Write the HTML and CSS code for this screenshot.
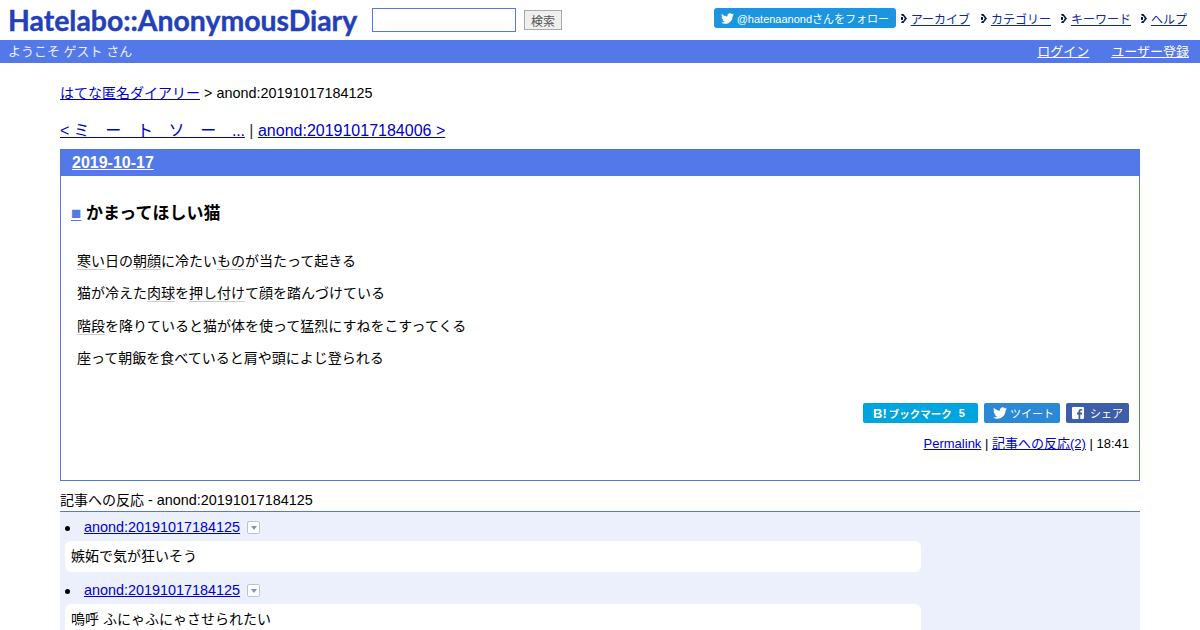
FILE: index.html
```html
<!DOCTYPE html>
<html lang="ja">
<head>
<meta charset="utf-8">
<title>かまってほしい猫</title>
<link rel="stylesheet" href="styles.css">
</head>
<body>
<header class="top">
  <a class="logo" href="#">Hatelabo::AnonymousDiary</a>
  <form class="search">
    <input class="search-input" type="text">
    <button class="search-btn" type="button">検索</button>
  </form>
  <nav class="top-nav">
    <a class="follow" href="#"><svg class="bird" viewBox="0 0 24 24"><path d="M23.953 4.57a10 10 0 01-2.825.775 4.958 4.958 0 002.163-2.723c-.951.555-2.005.959-3.127 1.184a4.92 4.92 0 00-8.384 4.482C7.69 8.095 4.067 6.13 1.64 3.162a4.822 4.822 0 00-.666 2.475c0 1.71.87 3.213 2.188 4.096a4.904 4.904 0 01-2.228-.616v.06a4.923 4.923 0 003.946 4.827 4.996 4.996 0 01-2.212.085 4.936 4.936 0 004.604 3.417 9.867 9.867 0 01-6.102 2.105c-.39 0-.779-.023-1.17-.067a13.995 13.995 0 007.557 2.209c9.053 0 13.998-7.496 13.998-13.985 0-.21 0-.42-.015-.63A9.935 9.935 0 0024 4.59z"/></svg>@hatenaanondさんをフォロー</a>
    <span class="nav-item"><svg class="chev" viewBox="0 0 6 9"><path d="M0 0h2.5L6 4.5 2.5 9H0l1-2h1.2l1.6-2.5L2.200 2H1z"/><path d="M0 3h2v3H0z"/></svg><a href="#">アーカイブ</a></span>
    <span class="nav-item"><svg class="chev" viewBox="0 0 6 9"><path d="M0 0h2.5L6 4.5 2.5 9H0l1-2h1.2l1.6-2.5L2.200 2H1z"/><path d="M0 3h2v3H0z"/></svg><a href="#">カテゴリー</a></span>
    <span class="nav-item"><svg class="chev" viewBox="0 0 6 9"><path d="M0 0h2.5L6 4.5 2.5 9H0l1-2h1.2l1.6-2.5L2.200 2H1z"/><path d="M0 3h2v3H0z"/></svg><a href="#">キーワード</a></span>
    <span class="nav-item"><svg class="chev" viewBox="0 0 6 9"><path d="M0 0h2.5L6 4.5 2.5 9H0l1-2h1.2l1.6-2.5L2.200 2H1z"/><path d="M0 3h2v3H0z"/></svg><a href="#">ヘルプ</a></span>
  </nav>
</header>
<div class="user-bar">
  <span>ようこそ ゲスト さん</span>
  <span class="user-links"><a href="#">ログイン</a><a href="#">ユーザー登録</a></span>
</div>
<main class="main">
  <p class="crumbs"><a class="cjk" href="#">はてな匿名ダイアリー</a> &gt; anond:20191017184125</p>
  <p class="pager"><a class="prev" href="#">&lt; ミ　ー　ト　ソ　ー　...</a> | <a href="#">anond:20191017184006 &gt;</a></p>
  <section class="day">
    <h2 class="day-title"><a href="#">2019-10-17</a></h2>
    <div class="day-body">
      <h3 class="entry-title"><a class="mark" href="#">■</a> かまってほしい猫</h3>
      <div class="entry-text">
        <p><a class="kw" href="#">寒い</a>日の<a class="kw" href="#">朝顔</a>に冷たい<a class="kw" href="#">もの</a>が当たって起きる</p>
        <p>猫が冷えた<a class="kw" href="#">肉球</a>を<a class="kw" href="#">押し付け</a>て顔を踏んづけている</p>
        <p><a class="kw" href="#">階段</a>を降りていると猫が体を使って猛烈にすねをこすってくる</p>
        <p>座って朝飯を食べていると肩や頭によじ登られる</p>
      </div>
      <div class="share">
        <a class="share-btn hatena" href="#"><b class="bang">B!</b><b class="hb-label">ブックマーク</b><b class="count">5</b></a>
        <a class="share-btn tweet" href="#"><svg class="bird big" viewBox="0 0 24 24"><path d="M23.953 4.57a10 10 0 01-2.825.775 4.958 4.958 0 002.163-2.723c-.951.555-2.005.959-3.127 1.184a4.92 4.92 0 00-8.384 4.482C7.69 8.095 4.067 6.13 1.64 3.162a4.822 4.822 0 00-.666 2.475c0 1.71.87 3.213 2.188 4.096a4.904 4.904 0 01-2.228-.616v.06a4.923 4.923 0 003.946 4.827 4.996 4.996 0 01-2.212.085 4.936 4.936 0 004.604 3.417 9.867 9.867 0 01-6.102 2.105c-.39 0-.779-.023-1.17-.067a13.995 13.995 0 007.557 2.209c9.053 0 13.998-7.496 13.998-13.985 0-.21 0-.42-.015-.63A9.935 9.935 0 0024 4.59z"/></svg>ツイート</a>
        <a class="share-btn fb" href="#"><svg class="fb-icon" viewBox="0 0 12 12"><path fill-rule="evenodd" d="M1 0h10a1 1 0 011 1v10a1 1 0 01-1 1H8.3V7.400h1.500l.3-1.800H8.300V4.500c0-.5.2-.9.9-.9h1V2c-.3 0-.8-.1-1.300-.1-1.400 0-2.400.8-2.400 2.400v1.300H5v1.800h1.500V12H1a1 1 0 01-1-1V1a1 1 0 011-1z"/></svg>シェア</a>
      </div>
      <p class="meta"><a href="#">Permalink</a> | <a href="#">記事への反応(2)</a> | 18:41</p>
    </div>
  </section>
  <section class="refs">
    <h4 class="refs-title"><span class="cjk">記事への反応</span> - anond:20191017184125</h4>
    <ul class="ref-list">
      <li class="ref">
        <div class="ref-head"><a href="#">anond:20191017184125</a><button class="toggle" type="button"></button></div>
        <div class="ref-card">嫉妬で気が狂いそう</div>
      </li>
      <li class="ref">
        <div class="ref-head"><a href="#">anond:20191017184125</a><button class="toggle" type="button"></button></div>
        <div class="ref-card">嗚呼 ふにゃふにゃさせられたい</div>
      </li>
    </ul>
  </section>
</main>
</body>
</html>
```
FILE: styles.css
```css
html { overflow: hidden; height: 630px; }
body {
  margin: 0;
  height: 630px;
  overflow: hidden;
  font-family: "Liberation Sans", "Noto Sans CJK JP", sans-serif;
  font-size: 14.4px;
  color: #000;
  background: #fff;
}
a { color: #0000cc; }
.cjk { font-size: 14px; }

.top { display: flex; align-items: flex-start; height: 40px; padding: 0 8px; box-sizing: border-box; }
.logo {
  display: block;
  width: 364px;
  flex: none;
  margin-top: 1px;
  font-family: "Lato", "Liberation Sans", sans-serif;
  font-size: 28.4px;
  line-height: 38px;
  font-weight: 700;
  -webkit-text-stroke: 0.4px #2440b8;
  color: #2440b8;
  text-decoration: none;
  white-space: nowrap;
}
.search { display: flex; align-items: flex-start; gap: 8px; }
.search-input {
  width: 144px; height: 24px; margin: 8px 0 0; padding: 0;
  box-sizing: border-box; border: 1px solid #5279e7; background: #fff;
}
.search-btn {
  width: 38px; height: 20px; margin: 10px 0 0; padding: 0;
  box-sizing: border-box; border: 1px solid #aaa; background: #efefef;
  color: #555; font: 12px "Liberation Sans", "Noto Sans CJK JP", sans-serif;
}
.top-nav { display: flex; align-items: center; margin-left: auto; margin-top: 8px; padding-right: 5px; font-size: 12px; }
.follow {
  display: flex; align-items: center; width: 182px; height: 20px; box-sizing: border-box;
  padding-left: 7px; margin-right: 5px;
  background: #1b95e0; border-radius: 3px; color: #fff; text-decoration: none; font-size: 11px;
  white-space: nowrap;
}
.bird { width: 13px; height: 13px; fill: #fff; margin-right: 3px; flex: none; }
.nav-item { display: flex; align-items: center; margin-right: 10px; }
.nav-item:first-of-type { margin-right: 11px; }
.nav-item:last-child { margin-right: 0; }
.nav-item a { color: #0a2a9c; }
.chev { width: 6px; height: 9px; margin-right: 4px; fill: #0b1a4a; flex: none; }

.user-bar {
  display: flex; justify-content: space-between; align-items: center;
  height: 23px; box-sizing: border-box; padding: 0 11px 2px 8px;
  background: #5279e7; color: #eef; font-size: 13px;
}
.user-links { display: flex; gap: 22px; }
.user-links a { color: #fff; }

.main { margin: 0 60px; }
.crumbs { margin: 21px 0 0; line-height: 18px; }
.pager { margin: 19px 0 0; font-size: 16px; line-height: 19px; color: #333; }
.prev { letter-spacing: -0.15px; }

.day { margin-top: 9px; border: 1px solid #5577d8; height: 332px; box-sizing: border-box; }
.day-title {
  margin: 0; padding: 0 11px; height: 26px; line-height: 26px;
  background: #5279e7; font-size: 16px;
}
.day-title a { color: #fff; }
.day-body { padding: 0 10px 0 11px; }
.entry-title { margin: 28px 0 0; font-size: 17px; line-height: 20px; font-weight: 700; }
.mark { color: #5279e7; font-size: 17px; margin-left: -1px; }
.entry-text { margin: 27px 0 0; padding-left: 5px; font-size: 14px; }
.entry-text p { margin: 0 0 12.4px; line-height: 20px; }
.kw { color: inherit; text-decoration: none; border-bottom: 1px solid #ccc; }
.share { display: flex; justify-content: flex-end; gap: 6px; margin-top: 35px; }
.share-btn {
  display: flex; align-items: center; height: 20px; box-sizing: border-box;
  border-radius: 2px; color: #fff; text-decoration: none; font-size: 11px; white-space: nowrap;
}
.hatena { width: 115px; padding-left: 10px; background: #00a4de; }
.bang { font-size: 13px; margin-right: 2px; }
.hb-label { font-size: 10.5px; }
.count { margin-left: 7px; font-size: 11px; }
.tweet { width: 76px; padding-left: 9px; background: #2a88d4; }
.big { width: 14px; height: 14px; margin-right: 3px; }
.fb { width: 63px; padding-left: 6px; background: #3d5ea8; }
.fb-icon { width: 12px; height: 12px; fill: #fff; margin-right: 6px; }
.meta { margin: 12px 0 0; font-size: 13px; text-align: right; line-height: 18px; }

.refs { margin-top: 10px; }
.refs-title { margin: 0; padding-bottom: 2px; font-size: 14.4px; font-weight: 400; line-height: 18px; border-bottom: 1px solid #5577d8; }
.ref-list { margin: 0; padding: 0; list-style: none; background: #ebf0fc; height: 200px; }
.ref { padding: 6px 5px 0; display: flex; flex-direction: column; margin-bottom: 3px; }
.ref-head { display: flex; align-items: center; line-height: 18px; padding-left: 19px; position: relative; }
.ref-head::before { content: ""; position: absolute; left: 0; top: 8px; width: 5px; height: 5px; border-radius: 50%; background: #000; }
.toggle {
  position: relative; width: 13px; height: 13px; margin: 1px 0 0 7px; padding: 0; box-sizing: border-box;
  border: 1px solid #b9c4dc; border-radius: 2px; background: #fff;
}
.toggle::after {
  content: ""; position: absolute; left: 2.5px; top: 4px;
  border: 3px solid transparent; border-top: 4px solid #7e92c8; border-bottom: 0;
}
.ref-card {
  width: 856px; height: 31px; margin-top: 5px; padding: 6px 6px 0; line-height: 18px; box-sizing: border-box;
  background: #fff; border-radius: 6px; font-size: 14px;
}
```
